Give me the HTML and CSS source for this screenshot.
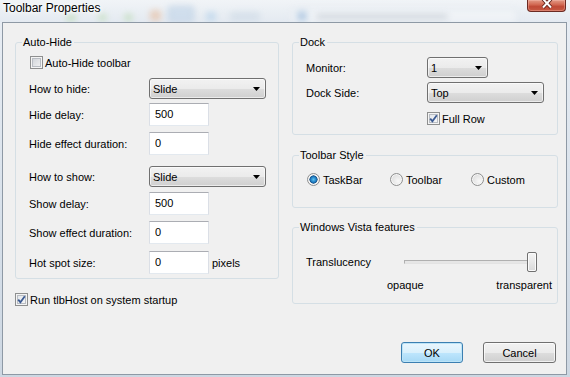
FILE: index.html
```html
<!DOCTYPE html>
<html lang="en">
<head>
    <meta charset="UTF-8">
    <meta name="viewport" content="width=device-width, initial-scale=1.0">
    <title>Toolbar Properties</title>
    <link rel="stylesheet" href="styles.css">
</head>
<body>
    <div class="window">
        <div class="titlebar">
            <div class="glass">
                <span class="blob b1"></span>
                <span class="blob b2"></span>
                <span class="blob b3"></span>
                <span class="blob b4"></span>
                <span class="blob b5"></span>
                <span class="blob b6"></span>
                <span class="blob b7"></span>
                <span class="blob url"></span>
                <span class="blob url-icon"></span>
                <span class="blob url-text"></span>
            </div>
            <span class="title">Toolbar Properties</span>
            <div class="close">
                <svg width="12" height="9" viewBox="0 0 12 9">
                    <path d="M2 -1 L10 7.5 M10 -1 L2 7.5" stroke="#5a1c14" stroke-width="3.6" fill="none"/>
                    <path d="M2 -1 L10 7.5 M10 -1 L2 7.5" stroke="#fff" stroke-width="2" fill="none"/>
                </svg>
            </div>
        </div>

        <div class="client">
            <div class="columns">
                <div class="col">
                    <fieldset class="group">
                        <legend>Auto-Hide</legend>
                        <div class="group-body hide-body">
                            <label class="check gap-6 nudge"><span class="box"></span>Auto-Hide toolbar</label>
                            <div class="row gap-9">
                                <span class="label">How to hide:</span>
                                <div class="combo combo-wide">
                                    <span>Slide</span>
                                    <svg width="7" height="4" viewBox="0 0 7 4"><polygon points="0,0 7,0 3.5,4" fill="#000"/></svg>
                                </div>
                            </div>
                            <div class="row gap-4">
                                <span class="label">Hide delay:</span>
                                <input class="text" type="text" value="500">
                            </div>
                            <div class="row gap-6">
                                <span class="label">Hide effect duration:</span>
                                <input class="text" type="text" value="0">
                            </div>
                            <div class="row gap-11">
                                <span class="label">How to show:</span>
                                <div class="combo combo-wide">
                                    <span>Slide</span>
                                    <svg width="7" height="4" viewBox="0 0 7 4"><polygon points="0,0 7,0 3.5,4" fill="#000"/></svg>
                                </div>
                            </div>
                            <div class="row gap-5">
                                <span class="label">Show delay:</span>
                                <input class="text" type="text" value="500">
                            </div>
                            <div class="row gap-6">
                                <span class="label">Show effect duration:</span>
                                <input class="text" type="text" value="0">
                            </div>
                            <div class="row gap-7">
                                <span class="label">Hot spot size:</span>
                                <input class="text" type="text" value="0">
                                <span class="unit">pixels</span>
                            </div>
                        </div>
                    </fieldset>
                    <label class="check startup"><span class="box checked"><svg width="9" height="9" viewBox="0 0 9 9"><path d="M1.2 4.6 L3.4 7.2 L7.8 1.2" stroke="#3b5a92" stroke-width="1.8" fill="none"/></svg></span>Run tlbHost on system startup</label>
                </div>

                <div class="col">
                    <fieldset class="group">
                        <legend>Dock</legend>
                        <div class="group-body dock-body">
                            <div class="row gap-7">
                                <span class="label label-dock">Monitor:</span>
                                <div class="combo combo-small">
                                    <span>1</span>
                                    <svg width="7" height="4" viewBox="0 0 7 4"><polygon points="0,0 7,0 3.5,4" fill="#000"/></svg>
                                </div>
                            </div>
                            <div class="row gap-4">
                                <span class="label label-dock">Dock Side:</span>
                                <div class="combo combo-side">
                                    <span>Top</span>
                                    <svg width="7" height="4" viewBox="0 0 7 4"><polygon points="0,0 7,0 3.5,4" fill="#000"/></svg>
                                </div>
                            </div>
                            <label class="check gap-9 full-row"><span class="box checked"><svg width="9" height="9" viewBox="0 0 9 9"><path d="M1.2 4.6 L3.4 7.2 L7.8 1.2" stroke="#3b5a92" stroke-width="1.8" fill="none"/></svg></span>Full Row</label>
                        </div>
                    </fieldset>

                    <fieldset class="group style-group">
                        <legend>Toolbar Style</legend>
                        <div class="group-body style-body">
                            <div class="radios">
                                <label class="radio r-task"><span class="dot checked"></span>TaskBar</label>
                                <label class="radio r-tool"><span class="dot"></span>Toolbar</label>
                                <label class="radio"><span class="dot"></span>Custom</label>
                            </div>
                        </div>
                    </fieldset>

                    <fieldset class="group vista-group">
                        <legend>Windows Vista features</legend>
                        <div class="group-body vista-body">
                            <div class="row slider-row">
                                <span class="label label-slider">Translucency</span>
                                <div class="slider">
                                    <span class="track"></span>
                                    <span class="thumb"></span>
                                </div>
                            </div>
                            <div class="ticks">
                                <span>opaque</span>
                                <span class="tick-end">transparent</span>
                            </div>
                        </div>
                    </fieldset>
                </div>
            </div>

            <div class="buttons">
                <button class="btn btn-ok" type="button">OK</button>
                <button class="btn btn-cancel" type="button">Cancel</button>
            </div>
        </div>
    </div>
</body>
</html>
```

FILE: styles.css
```css
* {
    margin: 0;
    padding: 0;
    box-sizing: border-box;
}
body {
    width: 570px;
    height: 377px;
    overflow: hidden;
    font-family: "Liberation Sans", Arial, sans-serif;
    font-size: 11px;
    color: #000;
    background: #d8e0e9;
}
.window {
    width: 570px;
    height: 377px;
    display: flex;
    flex-direction: column;
    background: linear-gradient(180deg, #e9eef4 0%, #d7e0ea 60%, #cdd7e2 100%);
}

/* title bar (glass) */
.titlebar {
    position: relative;
    height: 22px;
    display: flex;
    align-items: flex-start;
    padding-left: 3px;
    overflow: hidden;
    background: linear-gradient(180deg, #f1f4f7 0%, #e4eaf1 100%);
}
.glass {
    opacity: 0.55;
}
.glass .blob {
    position: absolute;
    filter: blur(3px);
    border-radius: 3px;
}
.b1 { left: 66px; top: 14px; width: 10px; height: 7px; background: #a9d39a; }
.b2 { left: 98px; top: 14px; width: 9px; height: 7px; background: #b4d9a6; }
.b3 { left: 124px; top: 14px; width: 9px; height: 7px; background: #b0d6a2; }
.b4 { left: 150px; top: 10px; width: 11px; height: 11px; background: #e7b592; border-radius: 6px; }
.b5 { left: 168px; top: 6px; width: 26px; height: 16px; background: #bcd2e8; border: 2px solid #9fbbd8; }
.b6 { left: 206px; top: 12px; width: 10px; height: 9px; background: #a8cbe9; }
.b7 { left: 230px; top: 12px; width: 30px; height: 9px; background: #c8d6e4; }
.url { left: 290px; top: 8px; width: 228px; height: 17px; background: #f6f8fa; border: 1px solid #ccd5df; }
.url-icon { left: 297px; top: 11px; width: 10px; height: 10px; background: #8fb3d9; border-radius: 5px; }
.url-text { left: 316px; top: 14px; width: 132px; height: 5px; background: #bcc3cb; }
.title {
    position: relative;
    font-size: 12px;
    line-height: 14px;
    margin-top: 1px;
    color: #000;
    text-shadow: 0 0 6px #fff, 0 0 3px #fff, 0 0 10px #fff;
}
.close {
    position: relative;
    margin-left: auto;
    margin-right: 4px;
    width: 39px;
    height: 12px;
    border: 1px solid #6b2a22;
    border-top: none;
    border-radius: 0 0 4px 4px;
    background: linear-gradient(180deg, #e29a86 0%, #d36b55 40%, #c04a36 60%, #c65a44 100%);
    box-shadow: inset 0 0 0 1px rgba(255, 200, 190, 0.35);
    display: flex;
    justify-content: center;
    align-items: flex-start;
}

/* client area */
.client {
    flex: 1;
    margin: 0 3px 2px 2px;
    border: 1px solid #8e99a5;
    background: #f0f0f0;
    display: flex;
    flex-direction: column;
    padding: 12px 10px 11px 12px;
}
.columns {
    display: grid;
    grid-template-columns: 264px 266px;
    column-gap: 13px;
    align-items: start;
}
.col {
    display: flex;
    flex-direction: column;
}

.group {
    border: 1px solid #d5dfe5;
    border-radius: 3px;
    min-width: 0;
}
.group legend {
    margin-left: 6px;
    padding: 0 2px 0 1px;
    line-height: 15px;
}
.group-body {
    display: flex;
    flex-direction: column;
    padding-left: 13px;
}
.hide-body { padding-bottom: 4px; }
.dock-body { padding-bottom: 9px; }
.style-group { margin-top: 13px; }
.style-body { padding-bottom: 20px; }
.vista-group { margin-top: 12px; }
.vista-body { padding-bottom: 10px; }

.gap-4 { margin-top: 4px; }
.gap-5 { margin-top: 5px; }
.gap-6 { margin-top: 6px; }
.gap-7 { margin-top: 7px; }
.gap-9 { margin-top: 9px; }
.gap-11 { margin-top: 11px; }

.row {
    display: flex;
    align-items: center;
}
.label {
    width: 120px;
    flex-shrink: 0;
}
.label-dock { width: 121px; }
.label-slider { width: 98px; }
.unit { margin-left: 3px; }

/* combo box */
.combo {
    height: 21px;
    border: 1px solid #707070;
    border-radius: 3px;
    background: linear-gradient(180deg, #f2f2f2 0%, #ebebeb 50%, #dddddd 51%, #cfcfcf 100%);
    box-shadow: inset 0 0 0 1px rgba(255, 255, 255, 0.6);
    display: flex;
    align-items: center;
    justify-content: space-between;
    padding: 0 5px 0 3px;
}
.combo-wide { width: 117px; }
.combo-small { width: 61px; }
.combo-side { width: 117px; }

/* text box */
.text {
    width: 60px;
    height: 23px;
    border: 1px solid #dbdfe6;
    border-top-color: #abadb3;
    border-bottom-color: #e3e9ef;
    background: #fff;
    font: inherit;
    color: #000;
    padding: 0 5px 2px;
    outline: none;
}

/* check box */
.check {
    display: flex;
    align-items: center;
    gap: 2px;
    height: 13px;
}
.nudge { margin-left: 1px; }
.startup { margin-top: 14px; }
.full-row { margin-left: 121px; }
.box {
    width: 13px;
    height: 13px;
    border: 1px solid #8e8f8f;
    background: linear-gradient(135deg, #cbcfd5 0%, #f6f6f6 100%);
    box-shadow: inset 0 0 0 1px #f4f4f4, inset 0 0 0 2px #b9bdc3;
    display: flex;
    align-items: center;
    justify-content: center;
}
.box.checked {
    background: linear-gradient(135deg, #dfe3e8 0%, #fafafa 100%);
}

/* radio */
.radios {
    display: flex;
    margin-top: 9px;
    padding-left: 1px;
}
.radio {
    display: flex;
    align-items: center;
    gap: 3px;
    height: 15px;
}
.r-task { width: 83px; }
.r-tool { width: 81px; }
.dot {
    width: 13px;
    height: 13px;
    border-radius: 50%;
    border: 1px solid #8e8f8f;
    background: radial-gradient(circle at 65% 65%, #f8f8f8 0%, #e3e3e3 60%, #cfcfcf 100%);
    box-shadow: inset 0 0 0 1px #f6f6f6;
}
.dot.checked {
    background: radial-gradient(circle at 50% 50%, #5cc4f2 0%, #1b76bd 38%, #1d4f7d 50%, #f4f4f4 56%, #dcdcdc 100%);
}

/* slider */
.slider-row { margin-top: 17px; }
.slider {
    width: 133px;
    height: 20px;
    display: flex;
    align-items: center;
}
.track {
    flex: 1;
    height: 4px;
    border: 1px solid #b0b0b0;
    border-bottom-color: #e3e3e3;
    border-right-color: #e3e3e3;
    background: #e6e6e6;
}
.thumb {
    width: 10px;
    height: 20px;
    margin-left: -4px;
    border: 1px solid #707070;
    border-radius: 2px;
    background: linear-gradient(180deg, #f4f4f4 0%, #e8e8e8 50%, #d9d9d9 100%);
    box-shadow: inset 0 0 0 1px #fbfbfb;
}
.ticks {
    display: flex;
    margin-top: 6px;
    padding-left: 81px;
    padding-right: 5px;
    line-height: 15px;
}
.tick-end { margin-left: auto; }

/* buttons */
.buttons {
    margin-top: auto;
    display: flex;
    justify-content: flex-end;
    gap: 20px;
}
.btn {
    height: 21px;
    border: 1px solid #707070;
    border-radius: 3px;
    font: inherit;
    color: #000;
    background: linear-gradient(180deg, #f2f2f2 0%, #ebebeb 50%, #dddddd 51%, #cfcfcf 100%);
    box-shadow: inset 0 0 0 1px rgba(255, 255, 255, 0.7);
}
.btn-ok {
    width: 62px;
    border-color: #3c7fb1;
    background: linear-gradient(180deg, #eaf6fd 0%, #d9f0fc 50%, #bee6fd 51%, #a7d9f5 100%);
    box-shadow: inset 0 0 0 1px #bde4f7;
}
.btn-cancel { width: 73px; }
```
